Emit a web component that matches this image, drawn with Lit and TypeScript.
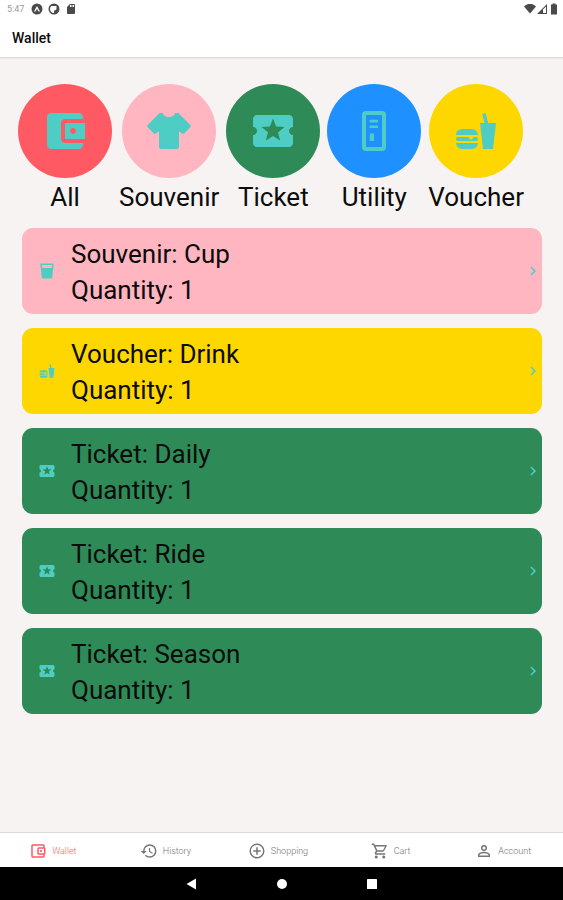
import { LitElement, html, svg, css, TemplateResult } from "lit";
import { customElement, property, state } from "lit/decorators.js";
import { classMap } from "lit/directives/class-map.js";

const ICONS: Record<string, string> = {
  walletFilled:
    "M21 18v1c0 1.1-.9 2-2 2H5c-1.11 0-2-.9-2-2V5c0-1.1.89-2 2-2h14c1.1 0 2 .9 2 2v1h-9c-1.11 0-2 .9-2 2v8c0 1.1.89 2 2 2h9zm-9-2h10V8H12v8zm4-2.5c-.83 0-1.5-.67-1.5-1.5s.67-1.5 1.5-1.5 1.5.67 1.5 1.5-.67 1.5-1.5 1.5z",
  shirt:
    "M16,21H8A1,1 0 0,1 7,20V12.07L5.7,13.12C5.31,13.5 4.68,13.5 4.29,13.12L1.46,10.29C1.07,9.9 1.07,9.27 1.46,8.88L7.34,3H9C9,4.1 10.34,5 12,5C13.66,5 15,4.1 15,3H16.66L22.54,8.88C22.93,9.27 22.93,9.9 22.54,10.29L19.71,13.12C19.32,13.5 18.69,13.5 18.3,13.12L17,12.07V20A1,1 0 0,1 16,21Z",
  ticket:
    "M20 12c0-1.1.9-2 2-2V6c0-1.1-.9-2-2-2H4c-1.1 0-1.99.9-1.99 2v4c1.1 0 1.99.9 1.99 2s-.89 2-2 2v4c0 1.1.9 2 2 2h16c1.1 0 2-.9 2-2v-4c-1.1 0-2-.9-2-2zm-4.42 4.8L12 14.5l-3.58 2.3 1.08-4.12-3.29-2.69 4.24-.25L12 5.8l1.54 3.95 4.24.25-3.29 2.69 1.09 4.11z",
  locker:
    "M8 2H16A2 2 0 0 1 18 4V20A2 2 0 0 1 16 22H8A2 2 0 0 1 6 20V4A2 2 0 0 1 8 2ZM8 4V20H16V4ZM9.8 6.4H14V7.7H9.8ZM9.8 9.2H14V10.5H9.8ZM9.9 13.2H12V17H9.9Z",
  food:
    "M15.5,21L14,8H16.23L15.1,3.46L16.84,3L18.09,8H22L20.5,21H15.5M5,11H10A3,3 0 0,1 13,14H2A3,3 0 0,1 5,11M13,18A3,3 0 0,1 10,21H5A3,3 0 0,1 2,18H13M3,15H8L9.5,16.5L11,15H12A1,1 0 0,1 13,16A1,1 0 0,1 12,17H3A1,1 0 0,1 2,16A1,1 0 0,1 3,15Z",
  cup:
    "M18.32,8H5.67L5.23,4H18.77M3,2L5,20.23C5.13,21.23 5.97,22 7,22H17C18,22 18.87,21.23 19,20.23L21,2H3Z",
  chevron: "M8.59,16.58L13.17,12L8.59,7.41L10,6L16,12L10,18L8.59,16.58Z",
  wallet:
    "M5,3C3.89,3 3,3.9 3,5V19A2,2 0 0,0 5,21H19A2,2 0 0,0 21,19V16.72C21.59,16.37 22,15.74 22,15V9C22,8.26 21.59,7.63 21,7.28V5A2,2 0 0,0 19,3H5M5,5H19V7H13A2,2 0 0,0 11,9V15A2,2 0 0,0 13,17H19V19H5V5M13,9H20V15H13V9M16,10.5A1.5,1.5 0 0,0 14.5,12A1.5,1.5 0 0,0 16,13.5A1.5,1.5 0 0,0 17.5,12A1.5,1.5 0 0,0 16,10.5Z",
  history:
    "M13.5,8H12V13L16.28,15.54L17,14.33L13.5,12.25V8M13,3A9,9 0 0,0 4,12H1L4.96,16.03L9,12H6A7,7 0 0,1 13,5A7,7 0 0,1 20,12A7,7 0 0,1 13,19C11.07,19 9.32,18.21 8.06,16.94L6.64,18.36C8.27,20 10.5,21 13,21A9,9 0 0,0 22,12A9,9 0 0,0 13,3",
  plus:
    "M12,20C7.59,20 4,16.41 4,12C4,7.59 7.59,4 12,4C16.41,4 20,7.59 20,12C20,16.41 16.41,20 12,20M12,2A10,10 0 0,0 2,12A10,10 0 0,0 12,22A10,10 0 0,0 22,12A10,10 0 0,0 12,2M13,7H11V11H7V13H11V17H13V13H17V11H13V7Z",
  cart:
    "M17,18A2,2 0 0,1 19,20A2,2 0 0,1 17,22C15.89,22 15,21.1 15,20C15,18.89 15.89,18 17,18M1,2H4.27L5.21,4H20A1,1 0 0,1 21,5C21,5.17 20.95,5.34 20.88,5.5L17.3,11.97C16.96,12.58 16.3,13 15.55,13H8.1L7.2,14.63L7.17,14.75A0.25,0.25 0 0,0 7.42,15H19V17H7C5.89,17 5,16.1 5,15C5,14.65 5.09,14.32 5.24,14.04L6.6,11.59L3,4H1V2M7,18A2,2 0 0,1 9,20A2,2 0 0,1 7,22C5.89,22 5,21.1 5,20C5,18.89 5.89,18 7,18M16,11L18.78,6H6.14L8.5,11H16Z",
  account:
    "M12,4A4,4 0 0,1 16,8A4,4 0 0,1 12,12A4,4 0 0,1 8,8A4,4 0 0,1 12,4M12,6A2,2 0 0,0 10,8A2,2 0 0,0 12,10A2,2 0 0,0 14,8A2,2 0 0,0 12,6M12,13C14.67,13 20,14.33 20,17V20H4V17C4,14.33 9.33,13 12,13M12,14.9C9.03,14.9 5.9,16.36 5.9,17V18.1H18.1V17C18.1,16.36 14.97,14.9 12,14.9Z",
  appBadge:
    "M12 1A11 11 0 1 0 12 23A11 11 0 1 0 12 1ZM12 6L18 17H15L12 11.5L9 17H6Z",
  syncBadge:
    "M12 1A11 11 0 1 0 12 23A11 11 0 1 0 12 1ZM7 6H17V11C17 14 14 15 12 15V20C7 20 4 16 4 12C4 9 5 7 7 6Z",
  sdCard:
    "M18,2H10L4,8V20A2,2 0 0,0 6,22H18A2,2 0 0,0 20,20V4A2,2 0 0,0 18,2M12,8H10V4H12V8M15,8H13V4H15V8M18,8H16V4H18V8Z",
  wifi: "M12 21L24 7C20 3 16 2 12 2C8 2 4 3 0 7Z",
  signal: "M22 2V22H2ZM20 7L14 13V20H20Z",
  battery: "M9 1H15V3H18V23H6V3H9Z",
  back: "M20 1V23L1 12Z",
  home: "M12 2A10 10 0 1 0 12 22A10 10 0 1 0 12 2Z",
  recent: "M3 2H21A1 1 0 0 1 22 3V21A1 1 0 0 1 21 22H3A1 1 0 0 1 2 21V3A1 1 0 0 1 3 2Z",
};

const icon = (name: string): TemplateResult => html`
  <svg viewBox="0 0 24 24" fill="currentColor" aria-hidden="true">
    ${svg`<path fill-rule="evenodd" d=${ICONS[name]}></path>`}
  </svg>
`;

const CATEGORIES = [
  { name: "All", icon: "walletFilled", tone: "all" },
  { name: "Souvenir", icon: "shirt", tone: "souvenir" },
  { name: "Ticket", icon: "ticket", tone: "ticket" },
  { name: "Utility", icon: "locker", tone: "utility" },
  { name: "Voucher", icon: "food", tone: "voucher" },
];

const ITEMS = [
  { type: "Souvenir", name: "Cup", quantity: 1, icon: "cup" },
  { type: "Voucher", name: "Drink", quantity: 1, icon: "food" },
  { type: "Ticket", name: "Daily", quantity: 1, icon: "ticket" },
  { type: "Ticket", name: "Ride", quantity: 1, icon: "ticket" },
  { type: "Ticket", name: "Season", quantity: 1, icon: "ticket" },
];

const TABS = [
  { name: "Wallet", icon: "wallet" },
  { name: "History", icon: "history" },
  { name: "Shopping", icon: "plus" },
  { name: "Cart", icon: "cart" },
  { name: "Account", icon: "account" },
];

const shared = css`
  * {
    box-sizing: border-box;
  }
  button {
    border: 0;
    padding: 0;
    margin: 0;
    background: none;
    font: inherit;
    color: inherit;
    cursor: pointer;
  }
  svg {
    display: block;
    width: 100%;
    height: 100%;
  }
  .all {
    background: #ff5a64;
  }
  .souvenir {
    background: #ffb6c1;
  }
  .ticket {
    background: #2e8b57;
  }
  .utility {
    background: #1e90ff;
  }
  .voucher {
    background: #ffd700;
  }
`;

@customElement("category-button")
class CategoryButton extends LitElement {
  @property() name = "";
  @property() icon = "";
  @property() tone = "";

  static styles = [
    shared,
    css`
      :host {
        display: block;
      }
      .category {
        display: flex;
        flex-direction: column;
        align-items: center;
        gap: 1px;
        font-size: 26px;
        line-height: 36px;
      }
      .disc {
        display: grid;
        place-items: center;
        width: 94px;
        height: 94px;
        border-radius: 50%;
        color: #4ecdc4;
      }
      .glyph {
        width: 48px;
        height: 48px;
      }
    `,
  ];

  render() {
    return html`
      <button class="category">
        <span class="disc ${this.tone}"><span class="glyph">${icon(this.icon)}</span></span>
        <span>${this.name}</span>
      </button>
    `;
  }
}

@customElement("wallet-card")
class WalletCard extends LitElement {
  @property() type = "";
  @property() name = "";
  @property() icon = "";
  @property({ type: Number }) quantity = 0;

  static styles = [
    shared,
    css`
      :host {
        display: block;
      }
      .card {
        display: flex;
        align-items: center;
        gap: 15px;
        width: 100%;
        padding: 6px 0 6px 16px;
        border-radius: 11px;
        font-size: 26px;
        line-height: 36px;
        text-align: left;
      }
      .glyph {
        flex: none;
        width: 18px;
        height: 18px;
        color: #4ecdc4;
      }
      .text {
        flex: 1;
        padding-top: 2px;
      }
      .line {
        display: block;
      }
    `,
  ];

  render() {
    return html`
      <button class="card ${this.type.toLowerCase()}">
        <span class="glyph">${icon(this.icon)}</span>
        <span class="text">
          <span class="line">${this.type}: ${this.name}</span>
          <span class="line">Quantity: ${this.quantity}</span>
        </span>
        <span class="glyph">${icon("chevron")}</span>
      </button>
    `;
  }
}

@customElement("app-root")
class AppRoot extends LitElement {
  @state() private tab = "Wallet";

  static styles = [
    shared,
    css`
      :host {
        display: flex;
        flex-direction: column;
        min-height: 100vh;
        background: #f7f3f2;
        color: #0c0c0c;
        font-family: Roboto, "Liberation Sans", sans-serif;
      }
      .status {
        display: flex;
        align-items: center;
        gap: 5px;
        height: 18px;
        padding: 0 3px 0 7px;
        background: #fff;
        color: #4a4a4a;
        font-size: 9px;
        line-height: 18px;
      }
      .time {
        margin-right: 2px;
        color: #9a9a9a;
      }
      .status-icon {
        width: 12px;
        height: 12px;
      }
      .system {
        display: flex;
        margin-left: auto;
      }
      .header {
        padding: 10px 12px 9px;
        background: #fff;
        border-bottom: 1px solid #dcdada;
        box-shadow: 0 1px 1px #ece9e8;
      }
      .title {
        margin: 0;
        font-size: 14px;
        line-height: 20px;
        font-weight: 500;
      }
      .content {
        flex: 1;
        padding: 26px 21px 26px 22px;
      }
      .categories {
        display: flex;
        gap: 7px;
        margin: 0 -4px 13px;
      }
      .cards {
        display: flex;
        flex-direction: column;
        gap: 14px;
        margin: 0;
        padding: 0;
        list-style: none;
      }
      .tabs {
        display: flex;
        height: 35px;
        background: #fff;
        border-top: 1px solid #dddada;
      }
      .tab {
        display: flex;
        flex: 1;
        align-items: center;
        justify-content: center;
        gap: 5px;
        padding: 2px 7px 0 0;
        color: #757575;
        font-size: 9px;
        font-weight: 300;
      }
      .tab.active {
        color: #ff5a64;
      }
      .tab-icon {
        width: 18px;
        height: 18px;
      }
      .system-nav {
        display: flex;
        align-items: center;
        justify-content: center;
        gap: 78px;
        height: 33px;
        background: #000;
        color: #fff;
      }
      .nav-icon {
        width: 12px;
        height: 12px;
      }
    `,
  ];

  render() {
    return html`
      <div class="status">
        <span class="time">5:47</span>
        ${["appBadge", "syncBadge", "sdCard"].map((n) => html`<span class="status-icon">${icon(n)}</span>`)}
        <span class="system">
          ${["wifi", "signal", "battery"].map((n) => html`<span class="status-icon">${icon(n)}</span>`)}
        </span>
      </div>
      <header class="header"><h1 class="title">Wallet</h1></header>
      <main class="content">
        <div class="categories">
          ${CATEGORIES.map(
            (c) => html`<category-button .name=${c.name} .icon=${c.icon} .tone=${c.tone}></category-button>`
          )}
        </div>
        <ul class="cards">
          ${ITEMS.map(
            (i) => html`<li>
              <wallet-card .type=${i.type} .name=${i.name} .icon=${i.icon} .quantity=${i.quantity}></wallet-card>
            </li>`
          )}
        </ul>
      </main>
      <nav class="tabs">
        ${TABS.map(
          (t) => html`<button
            class=${classMap({ tab: true, active: t.name === this.tab })}
            @click=${() => (this.tab = t.name)}
          >
            <span class="tab-icon">${icon(t.icon)}</span>
            <span>${t.name}</span>
          </button>`
        )}
      </nav>
      <div class="system-nav">
        <button class="nav-icon" aria-label="Back">${icon("back")}</button>
        <button class="nav-icon" aria-label="Home">${icon("home")}</button>
        <button class="nav-icon" aria-label="Recent apps">${icon("recent")}</button>
      </div>
    `;
  }
}
